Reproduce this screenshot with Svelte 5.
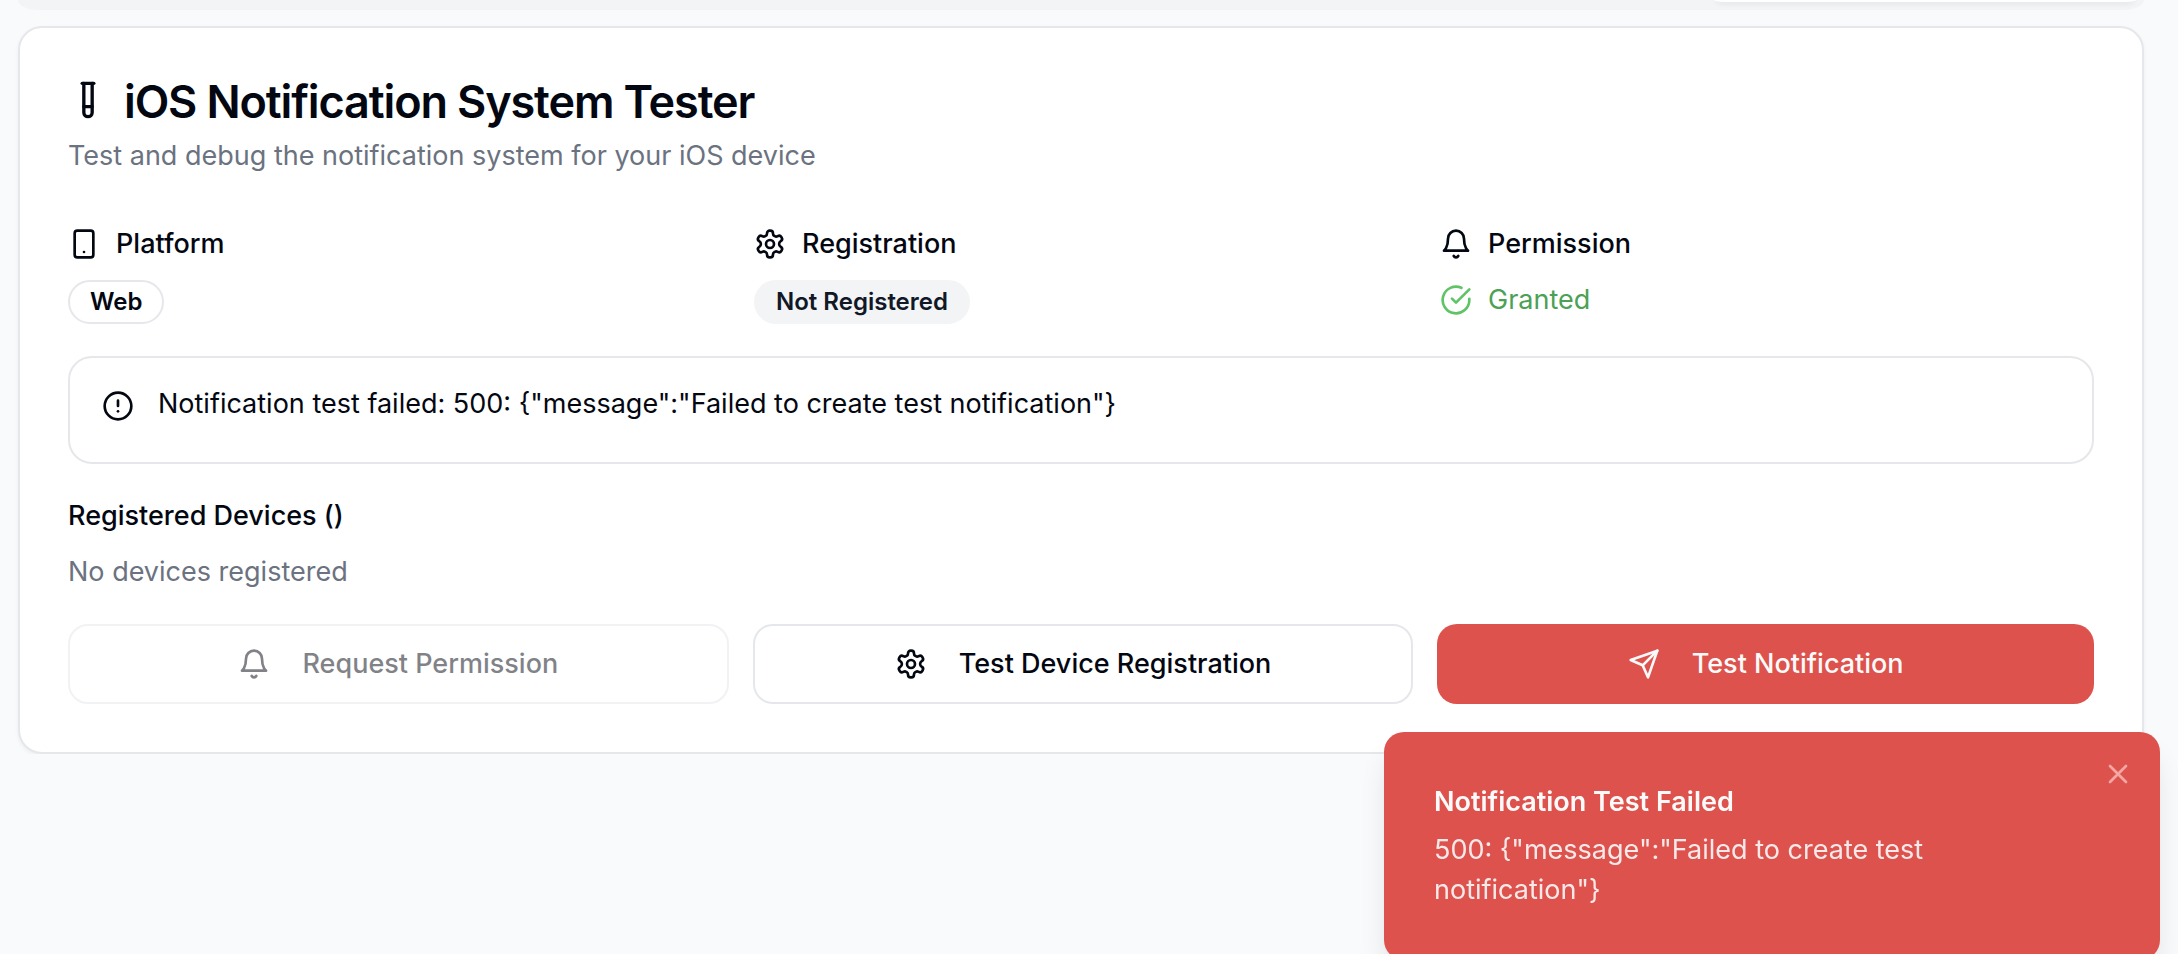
<script>
  const icons = {
    tube: ['M14.5 2v17.5c0 1.4-1.1 2.5-2.5 2.5s-2.5-1.1-2.5-2.5V2', 'M8.5 2h7', 'M14.5 16h-5'],
    phone: ['M7 2h10a2 2 0 0 1 2 2v16a2 2 0 0 1-2 2H7a2 2 0 0 1-2-2V4a2 2 0 0 1 2-2z', 'M12 18h.01'],
    gear: [
      'M12.22 2h-.44a2 2 0 0 0-2 2v.18a2 2 0 0 1-1 1.73l-.43.25a2 2 0 0 1-2 0l-.15-.08a2 2 0 0 0-2.73.73l-.22.38a2 2 0 0 0 .73 2.73l.15.1a2 2 0 0 1 1 1.72v.51a2 2 0 0 1-1 1.74l-.15.09a2 2 0 0 0-.73 2.73l.22.38a2 2 0 0 0 2.73.73l.15-.08a2 2 0 0 1 2 0l.43.25a2 2 0 0 1 1 1.73V20a2 2 0 0 0 2 2h.44a2 2 0 0 0 2-2v-.18a2 2 0 0 1 1-1.73l.43-.25a2 2 0 0 1 2 0l.15.08a2 2 0 0 0 2.73-.73l.22-.39a2 2 0 0 0-.73-2.73l-.15-.08a2 2 0 0 1-1-1.74v-.5a2 2 0 0 1 1-1.74l.15-.09a2 2 0 0 0 .73-2.73l-.22-.38a2 2 0 0 0-2.73-.73l-.15.08a2 2 0 0 1-2 0l-.43-.25a2 2 0 0 1-1-1.73V4a2 2 0 0 0-2-2z',
      'M15 12a3 3 0 1 1-6 0 3 3 0 0 1 6 0z'
    ],
    bell: ['M6 8a6 6 0 0 1 12 0c0 7 3 9 3 9H3s3-2 3-9', 'M10.3 21a1.94 1.94 0 0 0 3.4 0'],
    check: ['M22 11.08V12a10 10 0 1 1-5.93-9.14', 'm9 11 3 3L22 4'],
    warning: ['M22 12a10 10 0 1 1-20 0 10 10 0 0 1 20 0z', 'M12 8v4', 'M12 16h.01'],
    send: ['m22 2-7 20-4-9-9-4Z', 'M22 2 11 13'],
    close: ['M18 6 6 18', 'm6 6 12 12']
  };
  let toastOpen = $state(true);
</script>

{#snippet icon(name)}
  <svg class="icon {name}" viewBox="0 0 24 24" aria-hidden="true">
    {#each icons[name] as d}<path {d} />{/each}
  </svg>
{/snippet}

<div class="page">
  <div class="tabs"><div class="tab"></div></div>

  <main class="card">
    <header>
      <h1>{@render icon('tube')}<span>iOS Notification System Tester</span></h1>
      <p class="muted">Test and debug the notification system for your iOS device</p>
    </header>

    <section class="status">
      <div class="stat">
        <div class="label">{@render icon('phone')}<span>Platform</span></div>
        <span class="badge">Web</span>
      </div>
      <div class="stat">
        <div class="label">{@render icon('gear')}<span>Registration</span></div>
        <span class="badge secondary">Not Registered</span>
      </div>
      <div class="stat">
        <div class="label">{@render icon('bell')}<span>Permission</span></div>
        <div class="granted">{@render icon('check')}<span>Granted</span></div>
      </div>
    </section>

    <div class="notice" role="alert">
      {@render icon('warning')}
      <p>{'Notification test failed: 500: {"message":"Failed to create test notification"}'}</p>
    </div>

    <section class="devices">
      <h2>Registered Devices ()</h2>
      <p class="muted">No devices registered</p>
    </section>

    <div class="actions">
      <button type="button" class="outline" disabled>{@render icon('bell')}Request Permission</button>
      <button type="button" class="outline">{@render icon('gear')}Test Device Registration</button>
      <button type="button" class="danger">{@render icon('send')}Test Notification</button>
    </div>
  </main>
</div>

{#if toastOpen}
  <div class="toast" role="status">
    <strong>Notification Test Failed</strong>
    <p>{'500: {"message":"Failed to create test notification"}'}</p>
    <button type="button" class="dismiss" aria-label="Close" onclick={() => (toastOpen = false)}>
      {@render icon('close')}
    </button>
  </div>
{/if}

<style>
  :global(body) {
    background: #f9fafc;
  }
  .page,
  .toast {
    box-sizing: border-box;
    font: 400 27px/40px Inter, 'Liberation Sans', sans-serif;
    color: #030712;
  }
  .page *,
  .toast * {
    box-sizing: border-box;
  }
  .page {
    padding: 0 34px 0 18px;
  }
  h1,
  h2,
  p {
    margin: 0;
  }
  .icon {
    flex: none;
    width: 32px;
    height: 32px;
    fill: none;
    stroke: currentColor;
    stroke-width: 2;
    stroke-linecap: round;
    stroke-linejoin: round;
  }
  .tabs {
    display: flex;
    justify-content: flex-end;
    height: 10px;
    padding: 0 8px 8px;
    margin-bottom: 16px;
    overflow: hidden;
    border-radius: 0 0 20px 20px / 0 0 10px 10px;
    background: #f3f4f6;
  }
  .tab {
    width: 20%;
    border-radius: 0 0 16px 16px / 0 0 2px 2px;
    background: #fff;
    box-shadow: 0 2px 4px rgb(0 0 0 / 10%);
  }
  .card {
    display: flex;
    flex-direction: column;
    gap: 32px;
    padding: 48px;
    border: 2px solid #e5e7eb;
    border-radius: 24px;
    background: #fff;
    box-shadow: 0 2px 4px rgb(0 0 0 / 5%);
  }
  header {
    display: flex;
    flex-direction: column;
    gap: 12px;
    margin-bottom: 16px;
  }
  h1 {
    display: flex;
    align-items: center;
    gap: 16px;
    font-size: 45px;
    font-weight: 600;
    line-height: 44px;
    letter-spacing: -0.025em;
  }
  h1 span {
    padding-top: 4px;
  }
  .tube {
    width: 40px;
    height: 40px;
  }
  .muted {
    color: #6b7280;
  }
  .status {
    display: grid;
    grid-template-columns: repeat(3, 1fr);
    gap: 32px;
  }
  .stat,
  .devices {
    display: flex;
    flex-direction: column;
    align-items: flex-start;
    gap: 16px;
  }
  .label,
  .granted {
    display: flex;
    align-items: center;
    gap: 16px;
  }
  .label {
    font-weight: 500;
  }
  .badge {
    padding: 4px 20px;
    border: 2px solid #e5e7eb;
    border-radius: 22px;
    font-size: 24px;
    font-weight: 600;
    line-height: 32px;
  }
  .secondary {
    border-color: #f3f4f6;
    background: #f3f4f6;
    color: #111827;
  }
  .granted {
    color: #4ba155;
  }
  .check {
    color: #5fc466;
  }
  .notice {
    display: flex;
    gap: 24px;
    padding: 26px 32px 38px;
    border: 2px solid #e5e7eb;
    border-radius: 24px;
  }
  .warning {
    margin-top: 6px;
  }
  h2 {
    font-size: 27px;
    font-weight: 500;
    line-height: 40px;
  }
  .actions {
    display: flex;
    gap: 24px;
  }
  button {
    font: inherit;
    cursor: pointer;
  }
  .actions button {
    display: flex;
    flex: 1 1 0;
    align-items: center;
    justify-content: center;
    gap: 32px;
    height: 80px;
    padding: 0 32px;
    border: 0;
    border-radius: 20px;
    font-weight: 500;
    color: #030712;
  }
  .actions .outline {
    border: 2px solid #e5e7eb;
    background: #fff;
  }
  .actions button:disabled {
    opacity: 0.5;
    cursor: default;
  }
  .actions .danger {
    background: #dd524c;
    color: #fafafa;
  }
  .toast {
    position: fixed;
    right: 18px;
    bottom: -6px;
    display: flex;
    flex-direction: column;
    gap: 8px;
    width: 776px;
    max-width: calc(100% - 36px);
    padding: 50px 66px 50px 50px;
    border-radius: 20px;
    background: #dd524c;
    color: #fafafa;
    box-shadow: 0 20px 30px -6px rgb(0 0 0 / 12%), 0 8px 12px -8px rgb(0 0 0 / 10%);
  }
  .toast strong {
    font-weight: 600;
  }
  .toast p {
    max-width: 520px;
    opacity: 0.9;
  }
  .dismiss {
    position: absolute;
    top: 18px;
    right: 18px;
    display: flex;
    padding: 8px;
    border: 0;
    background: none;
    color: #f2a7a4;
  }
</style>
